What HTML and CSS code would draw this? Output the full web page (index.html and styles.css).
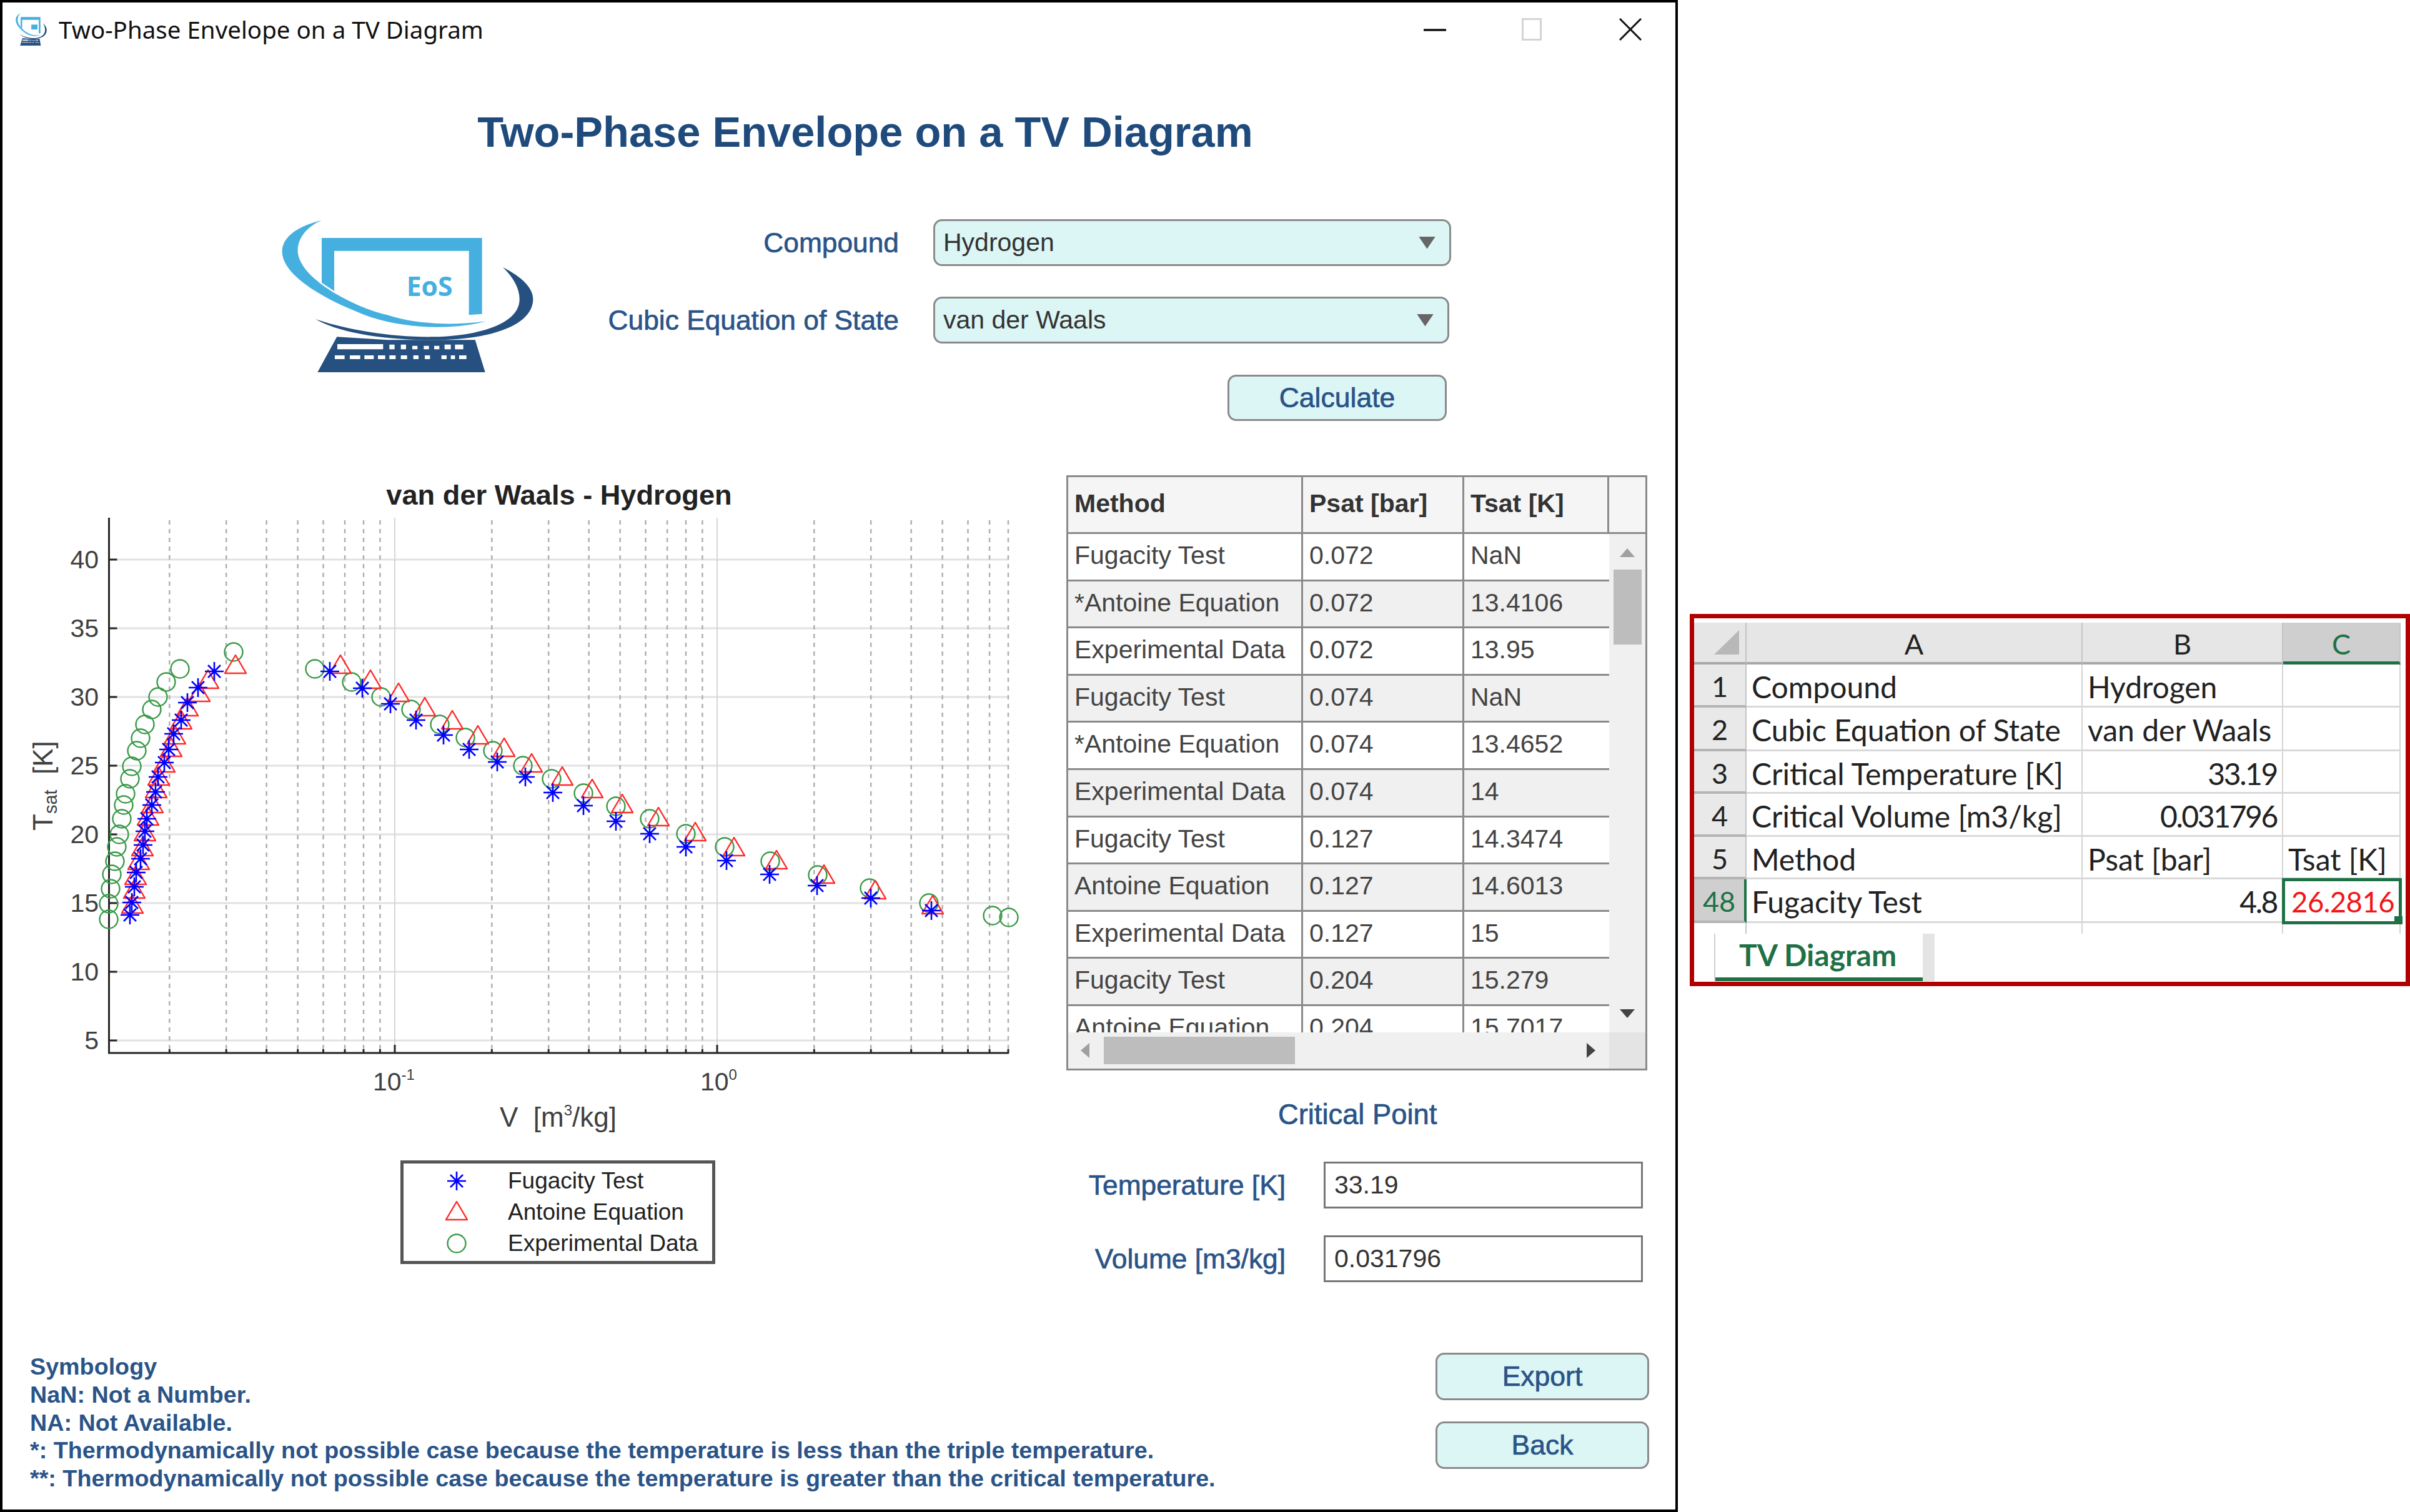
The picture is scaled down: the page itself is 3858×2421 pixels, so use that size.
FILE: index.html
```html
<!DOCTYPE html>
<html lang="en">
<head>
<meta charset="utf-8">
<title>Two-Phase Envelope on a TV Diagram</title>
<link rel="stylesheet" href="styles.css">
</head>
<body>
<svg class="defs" aria-hidden="true">
  <symbol id="logo" viewBox="90 60 1215 735" preserveAspectRatio="none">
    <path class="logo-light" d="M285 65C160 95 95 150 95 215C95 330 300 450 520 530C700 590 930 590 1075 550C900 575 720 560 600 520C430 480 170 340 170 210C170 150 215 95 285 65Z"/>
    <path class="logo-light" d="M285 150H1055V515L992 520V212H345V405L285 365Z"/>
    <path class="logo-dark" d="M1155 290C1250 340 1300 390 1300 445C1300 560 1120 640 820 640C600 640 380 610 255 540C400 590 620 628 820 625C1050 620 1235 560 1235 445C1235 390 1205 340 1155 290Z"/>
    <path class="logo-dark" d="M358 625L265 795H1070L1022 640L600 640Z"/>
    <path class="logo-keys" d="M360 660H580V685H360ZM610 662H635V685H610ZM665 662H690V685H665ZM720 668H745V685H720ZM775 668H800V685H775ZM825 668H850V685H825ZM875 662H905V685H875ZM925 662H965V685H925ZM348 714H395V732H348ZM420 714H470V732H420ZM490 714H535V732H490ZM555 714H590V732H555ZM610 714H640V732H610ZM665 714H695V732H665ZM725 714H750V732H725ZM780 714H805V732H780ZM860 714H885V732H860ZM905 714H925V732H905ZM945 714H980V732H945Z"/>
  </symbol>
  <symbol id="m-star" viewBox="-18 -18 36 36">
    <path class="star" d="M0-15V15M-15 0H15M-10-10L10 10M-10 10L10-10"/>
  </symbol>
  <symbol id="m-tri" viewBox="-18 -18 36 36">
    <path class="tri" d="M0-17L-17 12H17Z"/>
  </symbol>
  <symbol id="m-cir" viewBox="-18 -18 36 36">
    <circle class="cir" r="14.5"/>
  </symbol>
</svg>

<main class="window">
  <header class="titlebar">
    <svg class="app-icon" viewBox="90 60 1215 735" preserveAspectRatio="none"><use href="#logo" x="90" y="60" width="1215" height="735"/><rect class="logo-light" x="700" y="320" width="240" height="110"/></svg>
    <span class="app-name">Two-Phase Envelope on a TV Diagram</span>
    <div class="winctl">
      <svg class="ctl-min" viewBox="0 0 36 36"><path d="M0 19H36"/></svg>
      <svg class="ctl-max" viewBox="0 0 32 36"><rect x="1.5" y="1.5" width="29" height="33"/></svg>
      <svg class="ctl-close" viewBox="0 0 36 36"><path d="M1 1L35 35M35 1L1 35"/></svg>
    </div>
  </header>

  <h1 class="heading">Two-Phase Envelope on a TV Diagram</h1>

  <section class="top">
    <svg class="logo" viewBox="90 60 1215 735"><use href="#logo" x="90" y="60" width="1215" height="735"/><text class="logo-text" x="692" y="428">EoS</text></svg>
    <div class="form">
      <label class="lbl">Compound</label>
      <div class="select select-a"><span>Hydrogen</span><i class="caret"></i></div>
      <label class="lbl">Cubic Equation of State</label>
      <div class="select select-b"><span>van der Waals</span><i class="caret"></i></div>
      <button class="btn btn-calc">Calculate</button>
    </div>
  </section>

  <section class="main">
    <div class="plot">
      <svg id="chart" class="chart" viewBox="4 761 1699 1075" width="1699" height="1075"></svg>
      <div class="legend">
        <svg class="lg-mark"><use href="#m-star"/></svg><span>Fugacity Test</span>
        <svg class="lg-mark"><use href="#m-tri"/></svg><span>Antoine Equation</span>
        <svg class="lg-mark"><use href="#m-cir"/></svg><span>Experimental Data</span>
      </div>
    </div>

    <div class="side">
      <div class="tbl">
        <div class="t-head">
          <div>Method</div><div>Psat [bar]</div><div>Tsat [K]</div><div></div>
        </div>
        <div class="t-body">
          <div class="t-row"><div>Fugacity Test</div><div>0.072</div><div>NaN</div></div>
          <div class="t-row alt"><div>*Antoine Equation</div><div>0.072</div><div>13.4106</div></div>
          <div class="t-row"><div>Experimental Data</div><div>0.072</div><div>13.95</div></div>
          <div class="t-row alt"><div>Fugacity Test</div><div>0.074</div><div>NaN</div></div>
          <div class="t-row"><div>*Antoine Equation</div><div>0.074</div><div>13.4652</div></div>
          <div class="t-row alt"><div>Experimental Data</div><div>0.074</div><div>14</div></div>
          <div class="t-row"><div>Fugacity Test</div><div>0.127</div><div>14.3474</div></div>
          <div class="t-row alt"><div>Antoine Equation</div><div>0.127</div><div>14.6013</div></div>
          <div class="t-row"><div>Experimental Data</div><div>0.127</div><div>15</div></div>
          <div class="t-row alt"><div>Fugacity Test</div><div>0.204</div><div>15.279</div></div>
          <div class="t-row"><div>Antoine Equation</div><div>0.204</div><div>15.7017</div></div>
        </div>
        <div class="vbar"><i class="ar ar-up"></i><b class="v-thumb"></b><i class="ar ar-down"></i></div>
        <div class="hbar"><i class="ar ar-left"></i><b class="h-thumb"></b><i class="ar ar-right"></i></div>
        <div class="corner"></div>
      </div>
      <h2 class="crit">Critical Point</h2>
      <div class="crit-form">
        <label class="lbl">Temperature [K]</label>
        <div class="field">33.19</div>
        <label class="lbl">Volume [m3/kg]</label>
        <div class="field">0.031796</div>
      </div>
    </div>
  </section>

  <footer class="foot">
    <div class="notes">
      <p>Symbology</p>
      <p>NaN: Not a Number.</p>
      <p>NA: Not Available.</p>
      <p>*: Thermodynamically not possible case because the temperature is less than the triple temperature.</p>
      <p>**: Thermodynamically not possible case because the temperature is greater than the critical temperature.</p>
    </div>
    <div class="foot-btns">
      <button class="btn btn-foot">Export</button>
      <button class="btn btn-foot">Back</button>
    </div>
  </footer>
</main>

<aside class="excel">
  <div class="sheet">
    <div class="hd corner-hd"><i class="sel-all"></i></div><div class="hd">A</div><div class="hd">B</div><div class="hd hd-on">C</div>
    <div class="rh">1</div><div class="c">Compound</div><div class="c">Hydrogen</div><div class="c"></div>
    <div class="rh">2</div><div class="c">Cubic Equation of State</div><div class="c">van der Waals</div><div class="c"></div>
    <div class="rh">3</div><div class="c">Critical Temperature [K]</div><div class="c num">33.19</div><div class="c"></div>
    <div class="rh">4</div><div class="c">Critical Volume [m3/kg]</div><div class="c num">0.031796</div><div class="c"></div>
    <div class="rh">5</div><div class="c">Method</div><div class="c">Psat [bar]</div><div class="c">Tsat [K]</div>
    <div class="rh rh-on">48</div><div class="c">Fugacity Test</div><div class="c num">4.8</div><div class="c num sel">26.2816<i class="handle"></i></div>
    <div class="stub rh-blank"></div><div class="stub"></div><div class="stub"></div><div class="stub"></div>
  </div>
  <div class="tabs"><div class="tab">TV Diagram</div></div>
</aside>
<script src="chart.js"></script>
</body>
</html>
```
FILE: styles.css
```css
* { box-sizing: border-box; }
html, body { margin: 0; padding: 0; }
body {
  width: 3858px; height: 2421px; background: #fff; overflow: hidden;
  display: flex; align-items: flex-start;
  font-family: "Liberation Sans", Arial, sans-serif;
}
.defs { position: absolute; width: 0; height: 0; }
.logo-light { fill: #45b0e0; }
.logo-dark { fill: #25507f; }
.logo-keys { fill: #fff; }
.logo-text { fill: #45b0e0; font: bold 128px "Open Sans", sans-serif; }
.star { fill: none; stroke: #0000ff; stroke-width: 2.6; }
.tri { fill: none; stroke: #ff2a2a; stroke-width: 2.4; }
.cir { fill: none; stroke: #3a9a48; stroke-width: 2.4; }

.window {
  width: 2686px; height: 2421px; flex: none;
  border: 4px solid #000;
  display: flex; flex-direction: column;
}
.titlebar { height: 86px; flex: none; display: flex; align-items: center; padding: 0 54px 0 21px; }
.app-icon { width: 50px; height: 52px; margin-right: 19px; flex: none; }
.app-name { font: 38.5px "Noto Sans", sans-serif; color: #111; }
.winctl { margin-left: auto; display: flex; align-items: center; }
.winctl svg { height: 36px; fill: none; }
.ctl-min { width: 36px; stroke: #111; stroke-width: 3.5; }
.ctl-max { width: 32px; margin-left: 121px; stroke: #d4d4d4; stroke-width: 3; }
.ctl-close { width: 36px; margin-left: 124px; stroke: #111; stroke-width: 3; }

.heading {
  margin: 72px 0 0; height: 100px; line-height: 100px; text-align: center;
  padding-left: 84px;
  font-size: 68.6px; font-weight: bold; color: #1f4a7c;
}

.top { margin-top: 89px; display: flex; }
.logo { width: 405px; height: 245px; margin-left: 446px; flex: none; }
.form {
  display: grid; grid-template-columns: 584px 829px; column-gap: 55px;
  grid-auto-rows: 75px; row-gap: 49px; align-items: center;
}
.lbl {
  font-size: 44.3px; color: #2a5488; text-align: right; white-space: nowrap;
  -webkit-text-stroke: 0.7px #2a5488;
}
.select {
  height: 75px; display: flex; align-items: center; justify-content: space-between;
  background: #dcf6f5; border: 3px solid #8a8a8a; border-radius: 14px;
  padding: 0 22px 0 13px; font-size: 41px; color: #333;
}
.select-b { width: 826px; }
.caret { width: 27px; height: 20px; background: #666; clip-path: polygon(0 0, 100% 0, 50% 100%); }
.btn {
  font-family: inherit; font-size: 44.5px; color: #2a5488; -webkit-text-stroke: 0.7px #2a5488;
  background: #dcf6f5; border: 3px solid #8a8a8a; border-radius: 14px; padding: 0;
}
.btn-calc { grid-column: 2; width: 351px; height: 74px; margin-left: 471px; }

.main { margin-top: 87px; display: grid; grid-template-columns: 1703px 930px; }
.chart { display: block; }
.chart text { font-family: "Liberation Sans", Arial, sans-serif; white-space: pre; }
.ch-title { font-size: 45.2px; font-weight: bold; fill: #222; text-anchor: middle; }
.ch-tick { font-size: 41px; fill: #404040; }
.ch-sup { font-size: 24px; }
.ch-label { font-size: 44px; fill: #404040; }
.ch-sub { font-size: 29px; }
.g-major { stroke: #d6d6d6; stroke-width: 2; }
.g-minor { stroke: #b0b0b0; stroke-width: 2.5; stroke-dasharray: 7 7; }
.g-h { stroke: #e2e2e2; stroke-width: 3; }
.axis { stroke: #262626; stroke-width: 3; fill: none; }

.legend {
  width: 504px; height: 166px; margin: 22px 0 0 637px;
  border: 5px solid #555; padding-top: 3px;
  display: grid; grid-template-columns: 36px auto; column-gap: 64px; justify-content: start;
  padding-left: 67px; grid-auto-rows: 50px; align-items: center;
  font-size: 37px; color: #222; white-space: nowrap;
}
.lg-mark { width: 36px; height: 36px; }

.tbl {
  width: 930px; height: 953px; border: 3px solid #8a8a8a; background: #fff;
  display: grid; grid-template-columns: 866px 1fr; grid-template-rows: 91px 1fr 58px;
  font-size: 41px; color: #444;
}
.t-head {
  grid-column: 1 / 3; display: grid; grid-template-columns: 376px 258px 232px 1fr;
  background: #f5f5f5; border-bottom: 3px solid #8a8a8a;
  font-weight: bold; color: #333;
}
.t-head > div { padding-left: 10px; line-height: 85px; border-right: 3px solid #8a8a8a; white-space: nowrap; }
.t-head > div:last-child { border-right: 0; }
.t-body { overflow: hidden; }
.t-row {
  height: 75.6px; display: grid; grid-template-columns: 376px 258px 232px;
  border-bottom: 3px solid #8a8a8a;
}
.t-row > div { padding-left: 10px; line-height: 68px; border-right: 3px solid #8a8a8a; white-space: nowrap; }
.t-row > div:last-child { border-right: 0; }
.alt { background: #f0f0f0; }
.vbar { background: #f0f0f0; display: flex; flex-direction: column; align-items: center; }
.hbar { background: #f0f0f0; display: flex; align-items: center; }
.corner { background: #e4e4e4; }
.ar { display: block; flex: none; }
.ar-up { width: 24px; height: 14px; margin-top: 23px; background: #a0a0a0; clip-path: polygon(50% 0, 100% 100%, 0 100%); }
.ar-down { width: 24px; height: 14px; margin-top: auto; margin-bottom: 23px; background: #444; clip-path: polygon(0 0, 100% 0, 50% 100%); }
.ar-left { width: 14px; height: 24px; margin-left: 20px; background: #a0a0a0; clip-path: polygon(0 50%, 100% 0, 100% 100%); }
.ar-right { width: 14px; height: 24px; margin-left: auto; margin-right: 22px; background: #444; clip-path: polygon(0 0, 100% 50%, 0 100%); }
.v-thumb { width: 45px; height: 120px; margin-top: 20px; background: #bdbdbd; }
.h-thumb { width: 306px; height: 44px; margin-left: 23px; background: #bdbdbd; }

.crit {
  margin: 46px 0 50px; height: 50px; line-height: 50px; padding-left: 339px;
  font-size: 45.3px; font-weight: normal; color: #2a5488; -webkit-text-stroke: 0.7px #2a5488;
}
.crit-form {
  display: grid; grid-template-columns: 351px 511px; column-gap: 61px;
  grid-auto-rows: 75px; row-gap: 43px; align-items: center;
}
.field {
  height: 75px; border: 3px solid #777; background: #fff;
  padding-left: 14px; font-size: 41px; line-height: 68px; color: #333;
}

.foot { margin-top: 113px; display: flex; justify-content: space-between; padding: 0 42px 0 44px; }
.notes { font-size: 37.7px; font-weight: bold; color: #2a5488; line-height: 44.8px; }
.notes p { margin: 0; white-space: nowrap; }
.foot-btns { display: flex; flex-direction: column; gap: 34px; }
.btn-foot { width: 342px; height: 76px; }

.excel {
  width: 1153px; height: 596px; margin: 983px 0 0 19px; flex: none;
  border: 7px solid #b00000; padding-top: 7px; background: #fff;
  font-family: Lato, "Noto Sans", sans-serif; font-size: 48px; color: #222;
}
.sheet {
  display: grid; grid-template-columns: 84px 538px 321px 188px;
  grid-template-rows: 67px 69px 70px 68px 69px 68px 70px 17px;
}
.hd {
  background: #e6e6e6; border-right: 2px solid #c4c4c4; border-bottom: 4px solid #a8a8a8;
  text-align: center; line-height: 68px; color: #222; font-size: 45px;
}
.corner-hd { display: flex; align-items: flex-end; justify-content: flex-end; padding: 0 10px 12px 0; }
.sel-all { width: 40px; height: 39px; background: #b8b8b8; clip-path: polygon(100% 0, 100% 100%, 0 100%); }
.hd-on { background: #cfcfcf; border-bottom: 5px solid #1f7145; color: #1f7145; }
.rh {
  background: #e9e9e9; border-right: 2px solid #c4c4c4; border-bottom: 4px solid #b4b4b4;
  text-align: center; padding-top: 4px; line-height: 62px; color: #222; font-size: 45px;
}
.rh-on { background: #cfcfcf; color: #1f7145; border-right: 4px solid #1f7145; }
.c {
  border-right: 2px solid #d4d4d4; border-bottom: 3px solid #d9d9d9;
  padding: 4px 8px 0; line-height: 64px; white-space: nowrap;
}
.num { text-align: right; letter-spacing: -2.4px; }
.sel {
  position: relative; color: #f01818; font-size: 45.5px; letter-spacing: -0.6px;
  outline: 5px solid #1f7145; outline-offset: -3px;
}
.handle { position: absolute; right: -5px; bottom: -5px; width: 13px; height: 13px; background: #1f7145; }
.stub { border-right: 2px solid #d4d4d4; }
.rh-blank { border-right: 2px solid #c4c4c4; }
.tabs { padding-left: 32px; }
.tab {
  width: 353px; height: 76px; background: #fff;
  border-right: 19px solid #e4e4e4; border-left: 2px solid #d0d0d0;
  box-shadow: inset 0 -6px 0 #1f7145;
  text-align: left; padding-left: 38px; line-height: 68px;
  font-weight: bold; color: #1f7145;
}
```
FILE: chart.js
```js
(function () {
  var svg = document.getElementById('chart');
  var LEFT = 174.5, RIGHT = 1615, TOP = 829, BOTTOM = 1686;
  var X_1 = 1148, DECADE = 516;
  function xOf(v) { return X_1 + DECADE * Math.log10(v); }
  function yOf(t) { return 1666 - (t - 5) * 22; }

  var green = [[374,1044],[288,1071],[266,1092],[253,1116],[243,1136],[232,1160],[225,1182],[219,1202],[211,1227],[208,1247],[201,1271],[198,1289],[195,1311],[191,1336],[187,1356],[184,1379],[179,1400],[177,1423],[174,1447],[174,1472],
    [504,1071],[563,1092],[610,1116],[658,1136],[704,1160],[745,1181],[789,1202],[837,1226],[883,1247],[934,1270],[986,1291],[1040,1311],[1098,1335],[1160,1356],[1233,1379],[1309,1401],[1392,1422],[1487,1446],[1589,1466],[1615,1469]];
  var red = [[377,1078],[333,1102],[319,1123],[300,1146],[290,1167],[280,1191],[274,1211],[263,1236],[254,1257],[250,1277],[244,1301],[237,1321],[232,1346],[228,1370],[222,1392],[217,1416],[215,1438],[212,1462],
    [545,1078],[593,1102],[638,1123],[680,1146],[724,1167],[765,1191],[807,1211],[851,1236],[900,1257],[948,1277],[996,1301],[1054,1322],[1113,1346],[1175,1370],[1243,1391],[1319,1414],[1401,1439],[1493,1463]];
  var blue = [[343,1075],[317,1101],[300,1125],[290,1153],[278,1175],[270,1200],[263,1221],[253,1244],[249,1268],[243,1289],[235,1311],[232,1331],[229,1353],[225,1375],[218,1397],[215,1420],[211,1445],[208,1465],
    [528,1075],[580,1102],[625,1127],[666,1153],[710,1177],[751,1200],[796,1220],[841,1244],[885,1269],[934,1290],[986,1315],[1040,1335],[1098,1356],[1163,1378],[1232,1400],[1308,1418],[1394,1438],[1491,1458]];

  var out = [];
  function line(cls, x1, y1, x2, y2) {
    out.push('<line class="' + cls + '" x1="' + x1 + '" y1="' + y1 + '" x2="' + x2 + '" y2="' + y2 + '"/>');
  }
  // gridlines
  [5, 10, 15, 20, 25, 30, 35, 40].forEach(function (t) { line('g-h', LEFT, yOf(t), RIGHT, yOf(t)); });
  [0.01, 0.1, 1].forEach(function (d) {
    for (var m = 2; m <= 9; m++) {
      var x = xOf(d * m);
      if (x > LEFT && x <= RIGHT) {
        line('g-minor', x, TOP + 4, x, BOTTOM);
        line('axis', x, BOTTOM - 6, x, BOTTOM);
      }
    }
  });
  [0.1, 1].forEach(function (v) {
    line('g-major', xOf(v), TOP, xOf(v), BOTTOM);
    line('axis', xOf(v), BOTTOM - 13, xOf(v), BOTTOM);
  });
  // axes
  out.push('<path class="axis" d="M' + LEFT + ' ' + TOP + 'V' + BOTTOM + 'H' + RIGHT + '"/>');
  // y ticks
  [5, 10, 15, 20, 25, 30, 35, 40].forEach(function (t) {
    line('axis', LEFT, yOf(t), LEFT + 13, yOf(t));
    out.push('<text class="ch-tick" x="158" y="' + (yOf(t) + 14) + '" text-anchor="end">' + t + '</text>');
  });
  // x ticks
  out.push('<text class="ch-tick" x="597" y="1746">10<tspan class="ch-sup" dy="-17">-1</tspan></text>');
  out.push('<text class="ch-tick" x="1121" y="1746">10<tspan class="ch-sup" dy="-17">0</tspan></text>');
  // labels
  out.push('<text class="ch-title" x="895" y="808">van der Waals - Hydrogen</text>');
  out.push('<text class="ch-label" x="800" y="1804">V  [m<tspan class="ch-sup" dy="-18">3</tspan><tspan dy="18">/kg]</tspan></text>');
  out.push('<text class="ch-label" transform="translate(84 1330) rotate(-90)">T<tspan class="ch-sub" dy="7">sat</tspan><tspan dy="-7">  [K]</tspan></text>');
  // markers
  green.forEach(function (p) { out.push('<use href="#m-cir" x="' + (p[0] - 18) + '" y="' + (p[1] - 18) + '" width="36" height="36"/>'); });
  red.forEach(function (p) { out.push('<use href="#m-tri" x="' + (p[0] - 18) + '" y="' + (p[1] - 30) + '" width="36" height="36"/>'); });
  blue.forEach(function (p) { out.push('<use href="#m-star" x="' + (p[0] - 18) + '" y="' + (p[1] - 18) + '" width="36" height="36"/>'); });
  svg.innerHTML = out.join('');
})();
```
